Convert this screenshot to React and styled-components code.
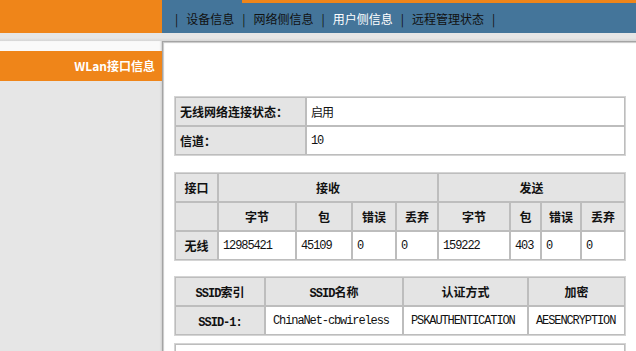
import styled, { createGlobalStyle } from 'styled-components';

const GlobalStyle = createGlobalStyle`
  html, body {
    margin: 0;
    overflow: hidden;
    background: #fff;
    font-family: "Noto Sans CJK SC", "DejaVu Sans", sans-serif;
    font-size: 12px;
    color: #111;
  }
`;

const Header = styled.div`
  display: flex;
  height: 33px;
`;

const Logo = styled.div`
  width: 162px;
  background: #ef8519;
`;

const NavBar = styled.div`
  flex: 1;
  display: flex;
  align-items: center;
  gap: 8px;
  padding: 3px 0 0 13px;
  background: linear-gradient(#ef8519, #ef8519) 80px 0 / 100% 3px no-repeat, #44759a;
`;

const NavSep = styled.span`
  color: #111;
`;

const NavItem = styled.span`
  color: ${p => (p.$active ? '#fff' : '#111')};
`;

const Strip = styled.div`
  height: 8px;
  background: linear-gradient(#e6e6e6 0 5px, #d6d6d6 8px);
`;

const Main = styled.div`
  display: flex;
  height: calc(100vh - 41px);
`;

const Sidebar = styled.div`
  width: 162px;
  padding-top: 10px;
  background: linear-gradient(#fafafa 0 10px, #e6e6e6 10px);
  box-shadow: inset -2px 0 2px -1px #cfcfcf;
`;

const SideItem = styled.div`
  height: 30px;
  line-height: 30px;
  background: #ef8519;
  color: #fff;
  font-weight: 700;
  text-align: right;
  padding-right: 7px;
`;

const Content = styled.div`
  flex: 1;
  overflow: hidden;
  background: #fff;
  border-top: 1px solid #a4a4a4;
  border-left: 1px solid #a4a4a4;
  box-shadow: inset 1px 1px 1px #c8c8c8;
  padding: 54px 10px 0 11px;
`;

const Table = styled.table`
  width: 452px;
  table-layout: fixed;
  border-collapse: separate;
  border-spacing: 0;
  border: 1px solid #d4d4d4;
  margin-bottom: ${p => p.$gap ?? 16}px;
`;

const Cell = styled.td`
  box-sizing: border-box;
  height: 29px;
  padding: 0 ${p => p.$pad ?? 4}px;
  border: 1px solid #bdbdbd;
  background: #fff;
  font-family: "Liberation Mono", "Noto Sans CJK SC", monospace;
  font-size: 12px;
  letter-spacing: -1.1px;
  text-align: left;
  white-space: nowrap;
`;

const Head = styled.th`
  box-sizing: border-box;
  height: 29px;
  padding: 0 4px;
  border: 1px solid #bdbdbd;
  background: #e4e4e4;
  font-weight: 700;
  font-size: 12px;
  text-align: ${p => p.$align ?? 'center'};
  white-space: nowrap;
`;

const Mono = styled.span`
  font-family: "Liberation Mono", monospace;
  font-size: 12px;
  letter-spacing: -1px;
`;

const navItems = ['设备信息', '网络侧信息', '用户侧信息', '远程管理状态'];

const stats = ['12985421', '45109', '0', '0', '159222', '403', '0', '0'];

export default function App() {
  return (
    <>
      <GlobalStyle />
      <Header>
        <Logo />
        <NavBar>
          {navItems.map(item => (
            <>
              <NavSep key={item + 's'}>|</NavSep>
              <NavItem key={item} $active={item === '用户侧信息'}>{item}</NavItem>
            </>
          ))}
          <NavSep>|</NavSep>
        </NavBar>
      </Header>
      <Strip />
      <Main>
        <Sidebar>
          <SideItem>WLan接口信息</SideItem>
        </Sidebar>
        <Content>
          <Table>
            <colgroup>
              <col width="131" />
              <col />
            </colgroup>
            <tbody>
              <tr>
                <Head $align="left">无线网络连接状态：</Head>
                <Cell>启用</Cell>
              </tr>
              <tr>
                <Head $align="left">信道：</Head>
                <Cell>10</Cell>
              </tr>
            </tbody>
          </Table>

          <Table $gap={15}>
            <colgroup>
              {[43, 78, 56, 44, 42, 72, 31, 40, 44].map((w, i) => (
                <col key={i} width={w} />
              ))}
            </colgroup>
            <tbody>
              <tr>
                <Head>接口</Head>
                <Head colSpan={4}>接收</Head>
                <Head colSpan={4}>发送</Head>
              </tr>
              <tr>
                <Head />
                <Head>字节</Head>
                <Head>包</Head>
                <Head>错误</Head>
                <Head>丢弃</Head>
                <Head>字节</Head>
                <Head>包</Head>
                <Head>错误</Head>
                <Head>丢弃</Head>
              </tr>
              <tr>
                <Head>无线</Head>
                {stats.map((v, i) => (
                  <Cell key={i}>{v}</Cell>
                ))}
              </tr>
            </tbody>
          </Table>

          <Table $gap={7}>
            <colgroup>
              <col width="90" />
              <col width="138" />
              <col width="125" />
              <col />
            </colgroup>
            <tbody>
              <tr>
                <Head><Mono>SSID</Mono>索引</Head>
                <Head><Mono>SSID</Mono>名称</Head>
                <Head>认证方式</Head>
                <Head>加密</Head>
              </tr>
              <tr>
                <Head><Mono>SSID-1:</Mono></Head>
                <Cell $pad={7}>ChinaNet-cbwireless</Cell>
                <Cell $pad={7}>PSKAUTHENTICATION</Cell>
                <Cell $pad={7}>AESENCRYPTION</Cell>
              </tr>
            </tbody>
          </Table>

          <Table>
            <tbody>
              <tr>
                <Cell />
              </tr>
            </tbody>
          </Table>
        </Content>
      </Main>
    </>
  );
}
